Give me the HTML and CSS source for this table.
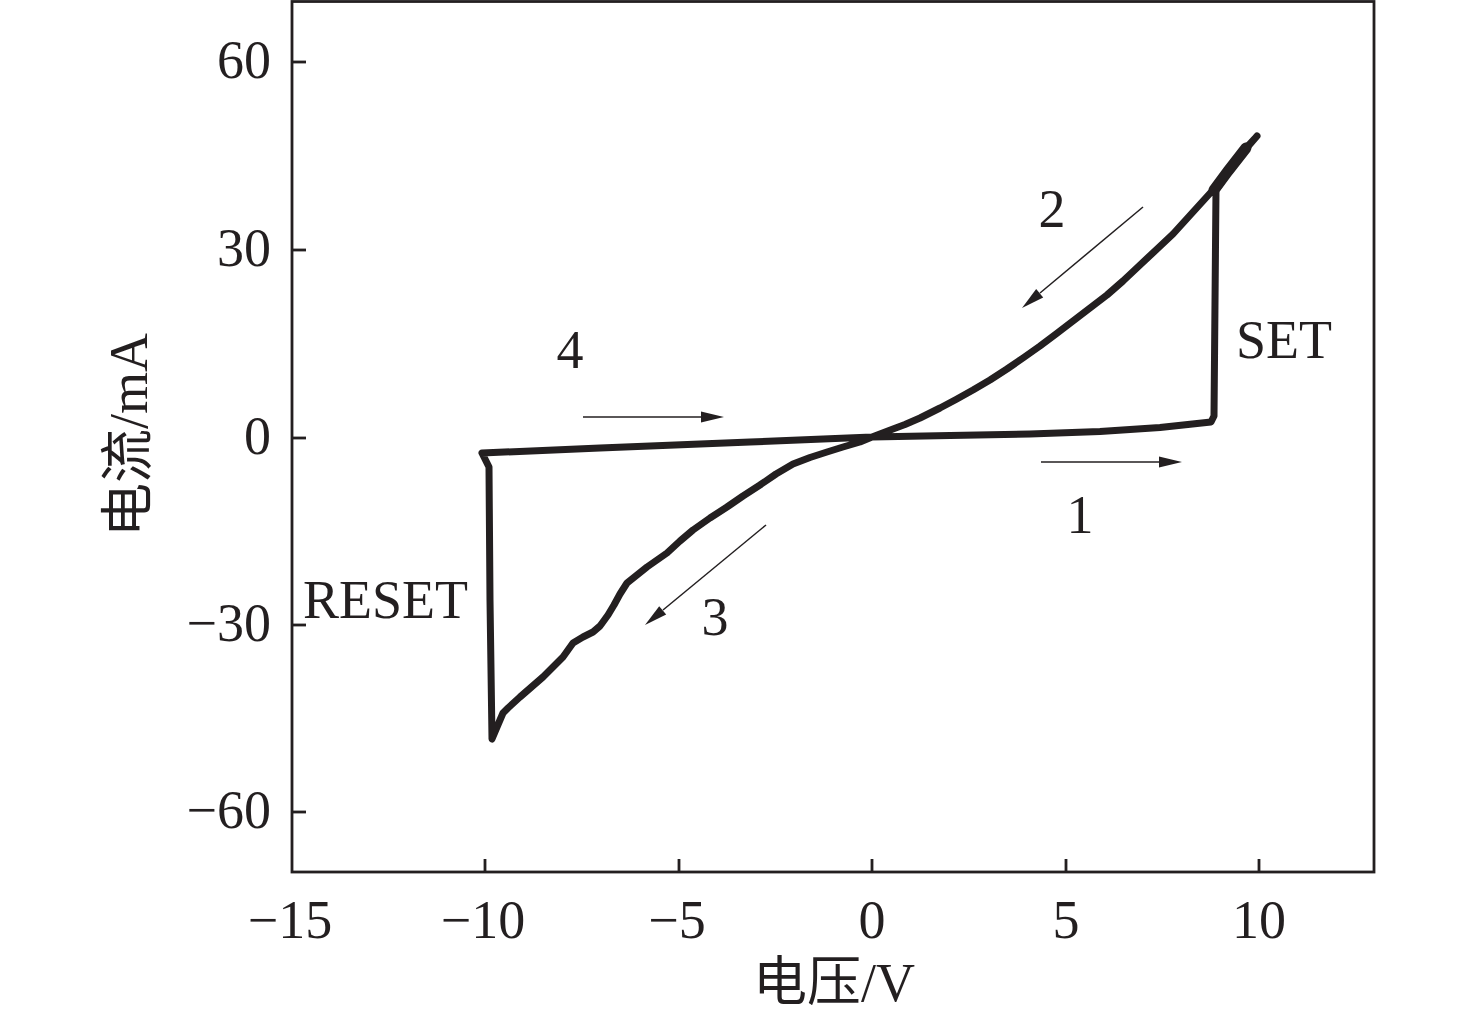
FILE: index.html
```html
<!DOCTYPE html>
<html lang="zh-CN">
<head>
<meta charset="utf-8">
<title>电流-电压曲线</title>
<link rel="stylesheet" href="styles.css">
</head>
<body>
<figure class="chart">
<svg class="plot" width="1476" height="1021" viewBox="0 0 1476 1021" xmlns="http://www.w3.org/2000/svg">
  <!-- frame -->
  <rect class="frame" x="292" y="1.5" width="1082" height="870.5"/>
  <!-- y ticks -->
  <g class="ticks">
    <line x1="292" y1="62" x2="306" y2="62"/>
    <line x1="292" y1="250" x2="306" y2="250"/>
    <line x1="292" y1="438" x2="306" y2="438"/>
    <line x1="292" y1="625" x2="306" y2="625"/>
    <line x1="292" y1="812" x2="306" y2="812"/>
    <!-- x ticks -->
    <line x1="485" y1="872" x2="485" y2="859"/>
    <line x1="679" y1="872" x2="679" y2="859"/>
    <line x1="872" y1="872" x2="872" y2="859"/>
    <line x1="1066" y1="872" x2="1066" y2="859"/>
    <line x1="1259" y1="872" x2="1259" y2="859"/>
  </g>
  <!-- y tick labels -->
  <g class="lbl lbl-end">
    <text x="271" y="78">60</text>
    <text x="271" y="266">30</text>
    <text x="271" y="454">0</text>
    <text x="271" y="641">−30</text>
    <text x="271" y="828">−60</text>
  </g>
  <!-- x tick labels -->
  <g class="lbl lbl-mid">
    <text x="290" y="938">−15</text>
    <text x="483" y="938">−10</text>
    <text x="677" y="938">−5</text>
    <text x="872" y="938">0</text>
    <text x="1066" y="938">5</text>
    <text x="1259" y="938">10</text>
  </g>
  <!-- axis titles -->
  <text class="title lbl-mid" x="834" y="1001">电压/V</text>
  <text class="title lbl-mid" transform="translate(147,435) rotate(-90)">电流/mA</text>

  <!-- I-V curve -->
  <path class="curve" d="M872,437 L950,435.5 L1030,434 L1100,431.5 L1160,427.5 L1211,422 L1214,416 L1216,190 L1230,170 L1245,150 L1257,136 L1245,149 L1230,169 L1213,190 L1193,212 L1173,234 L1156,250 L1140,265 L1123,281 L1107,295 L1090,308 L1073,321 L1056,334 L1040,346 L1023,358 L1007,369 L990,380 L973,390 L956,399.5 L940,408 L920,418 L905,424.5 L893,429 L872,437 L860,442 L843,447 L827,452 L810,457.5 L793,464 L776,474 L760,485 L743,496 L727,507 L710,518 L693,530 L680,541 L667,553 L647,567 L627,583 L620,594 L614,605 L608,615 L600,626 L593,632 L583,637 L573,643 L563,657 L553,667 L543,677 L520,697 L508,708 L503,713 L497,727 L492,739 L490,600 L489,467 L482,453 L600,448 L750,442 L872,437"/>
  <path class="curve-thick" d="M1214,190 L1228,171 L1246,148"/>

  <!-- direction arrows -->
  <g class="arrow">
    <line x1="1041" y1="462" x2="1160" y2="462"/>
    <polygon points="1182,462 1159,456.5 1159,467.5"/>
    <line x1="583" y1="417" x2="702" y2="417"/>
    <polygon points="724,417 701,411.5 701,422.5"/>
    <line x1="1143" y1="207" x2="1040" y2="293"/>
    <polygon points="1022,308 1043.2,297.5 1036.2,289"/>
    <line x1="766" y1="525" x2="663" y2="610"/>
    <polygon points="645,625 666.2,614.6 659.2,606.2"/>
  </g>

  <!-- annotations -->
  <g class="lbl lbl-mid">
    <text x="1080" y="533">1</text>
    <text x="1052" y="227">2</text>
    <text x="715" y="635">3</text>
    <text x="570" y="368">4</text>
  </g>
  <g class="lbl">
    <text x="1236" y="358">SET</text>
    <text x="303" y="618">RESET</text>
  </g>
</svg>
</figure>
</body>
</html>
```

FILE: styles.css
```css
html, body {
  margin: 0;
  padding: 0;
  background: #ffffff;
}

.chart {
  margin: 0;
  width: 1476px;
  height: 1021px;
  overflow: hidden;
}

.plot {
  display: block;
}

.frame {
  fill: none;
  stroke: #231f20;
  stroke-width: 2.8;
}

.ticks line {
  stroke: #231f20;
  stroke-width: 2.8;
}

.lbl text,
.title {
  font-family: "Liberation Serif", "Noto Sans CJK SC", serif;
  font-size: 54px;
  fill: #231f20;
}

.lbl-end text {
  text-anchor: end;
}

.lbl-mid text,
.title.lbl-mid {
  text-anchor: middle;
}

.curve {
  fill: none;
  stroke: #231f20;
  stroke-width: 7;
  stroke-linejoin: round;
  stroke-linecap: round;
}

.curve-thick {
  fill: none;
  stroke: #231f20;
  stroke-width: 11;
  stroke-linecap: round;
}

.arrow line {
  stroke: #231f20;
  stroke-width: 1.5;
}

.arrow polygon {
  fill: #231f20;
}
```
